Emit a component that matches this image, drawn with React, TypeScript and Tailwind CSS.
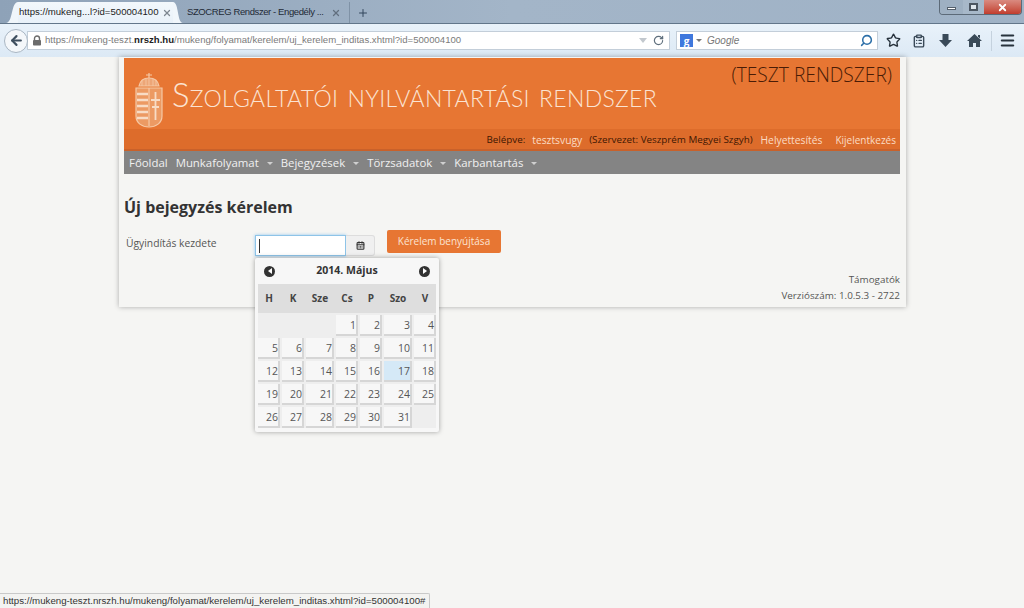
import { Star, ClipboardList, Menu, RotateCw, Search, ArrowLeft, X, Plus, CalendarDays } from "lucide-react";

const headers = ["H", "K", "Sze", "Cs", "P", "Szo", "V"];
const days: (number | null)[] = [
  null, null, null, 1, 2, 3, 4,
  5, 6, 7, 8, 9, 10, 11,
  12, 13, 14, 15, 16, 17, 18,
  19, 20, 21, 22, 23, 24, 25,
  26, 27, 28, 29, 30, 31, null,
];

function Caret() {
  return <span className="ml-[8px] mt-[1px] h-0 w-0 border-x-[3px] border-t-[3px] border-x-transparent border-t-[#d0d0d0]" />;
}

function Crest() {
  return (
    <svg width="28" height="56" viewBox="0 0 28 56" fill="none" stroke="#f6c9a6" strokeWidth="1.2">
      <path d="M14 1v5M11 3h6" />
      <path d="M4 14c1-5 5-8 10-8s9 3 10 8z" fill="#eda677" />
      <path d="M7 8v6M11 7v7M14 7v7M18 7v7M21 8v6" strokeWidth="0.8" />
      <path d="M1 16h26v28c0 7-6 11-13 11S1 51 1 44z" fill="#ec9a63" />
      <path d="M14 16v38" />
      <path d="M2 22h11M2 28h11M2 34h11M2 40h11M2 46h11" stroke="#f8dcc5" strokeWidth="2.4" />
      <path d="M20.5 20v28M16 28h9M17 35h7" stroke="#f8dcc5" strokeWidth="1.8" />
    </svg>
  );
}

export default function App() {
  return (
    <div className="relative flex h-[608px] w-[1024px] flex-col overflow-hidden bg-[#f5f5f3] font-['Open_Sans',sans-serif] text-[#333]">
      {/* Browser chrome */}
      <div className="relative flex h-[23px] shrink-0 items-end bg-gradient-to-r from-[#8ea2b8] via-[#a3b5c8] to-[#9fb2c6] font-['Liberation_Sans',sans-serif] text-[#1d1d1d]">
        <div className="ml-[6px] flex h-[21px] items-end">
          <svg width="12" height="21" viewBox="0 0 12 21" className="shrink-0">
            <path d="M0 21C7 21 5 0 12 0V21Z" fill="#f0f6fb" />
          </svg>
          <div className="flex h-[21px] w-[155px] items-center justify-between bg-gradient-to-b from-[#f3f8fc] to-[#e8f1f9] pl-[1px] pr-[1px] text-[9.6px]">
            <span className="whitespace-nowrap">https://mukeng...l?id=500004100</span>
            <X size={10} strokeWidth={3} className="text-[#7d8791]" />
          </div>
          <svg width="10" height="21" viewBox="0 0 10 21" className="shrink-0">
            <path d="M0 0C6 0 4 21 10 21H0Z" fill="#f0f6fb" />
          </svg>
        </div>
        <div className="flex h-[21px] w-[166px] items-center justify-between pl-[4px] pr-[8px] text-[9.5px] tracking-[-0.4px] text-[#1f2a36]">
          <span className="whitespace-nowrap">SZOCREG Rendszer - Engedély ...</span>
          <X size={10} strokeWidth={3} className="text-[#62707f]" />
        </div>
        <div className="flex h-[21px] items-center border-l border-[#7f92a6] pl-[7px]">
          <Plus size={12} strokeWidth={2} className="text-[#33475c]" />
        </div>
        {/* Window buttons */}
        <div className="absolute right-[2px] top-0 flex h-[15px] w-[83px] overflow-hidden rounded-b-[4px] border border-t-0 border-[#5c6a78]">
          <div className="flex w-[23px] items-center justify-center bg-[#9eb0c2]">
            <span className="mt-[3px] h-[3px] w-[9px] border border-[#54606c] bg-white" />
          </div>
          <div className="flex w-[21px] items-center justify-center bg-[#a7b8c9]">
            <span className="h-[8px] w-[9px] border-2 border-[#4c5763] bg-[#dfe7ee]" />
          </div>
          <div className="flex flex-1 items-center justify-center bg-gradient-to-b from-[#d98a80] to-[#c13c2d]">
            <X size={11} strokeWidth={4} className="text-white" />
          </div>
        </div>
      </div>
      <div className="flex h-[34px] shrink-0 items-center border-t border-[#62768a] bg-gradient-to-b from-[#e9f2fa] to-[#dce9f5] pl-[4px] pr-[6px]">
        <div className="z-10 flex h-[24px] w-[24px] shrink-0 items-center justify-center rounded-full border border-[#a9b6c3] bg-[#f4f7fa]">
          <ArrowLeft size={15} strokeWidth={3.4} className="text-[#3f4f5f]" />
        </div>
        <div className="-ml-[1px] flex h-[19px] w-[643px] shrink-0 items-center border border-[#c3ced9] bg-white pl-[4px] pr-[5px] font-['Liberation_Sans',sans-serif] text-[9.6px] text-[#7b7b7b]">
          <svg width="10" height="11" viewBox="0 0 10 11" className="mr-[3px] shrink-0 text-[#6b6b6b]">
            <path d="M2.5 5V3.5a2.5 2.5 0 0 1 5 0V5" fill="none" stroke="currentColor" strokeWidth="1.4" />
            <rect x="1" y="5" width="8" height="5.5" rx="0.8" fill="currentColor" />
          </svg>
          <span className="whitespace-nowrap">
            https://mukeng-teszt.<span className="font-bold text-[#222]">nrszh.hu</span>/mukeng/folyamat/kerelem/uj_kerelem_inditas.xhtml?id=500004100
          </span>
          <span className="ml-auto mr-[6px] h-0 w-0 border-x-[4px] border-t-[5px] border-x-transparent border-t-[#c2c8ce]" />
          <RotateCw size={11} strokeWidth={2.6} className="text-[#5f6f7d]" />
        </div>
        <div className="ml-[6px] flex h-[19px] w-[202px] shrink-0 items-center border border-[#c3ced9] bg-white pl-[3px] pr-[4px]">
          <span className="flex h-[13px] w-[13px] items-center justify-center bg-[#3f78dd] text-[10px] font-bold leading-none text-white">g</span>
          <span className="ml-[3px] h-0 w-0 border-x-[3px] border-t-[3px] border-x-transparent border-t-[#777]" />
          <span className="ml-[5px] font-['Liberation_Sans',sans-serif] text-[10px] italic text-[#777]">Google</span>
          <Search size={13} strokeWidth={2.8} className="ml-auto -scale-x-100 text-[#2c6fa8]" />
        </div>
        <div className="ml-[8px] flex flex-1 items-center text-[#3a4a58]">
          <Star size={15} strokeWidth={2.2} className="text-[#27323c]" />
          <ClipboardList size={14} strokeWidth={2.4} className="ml-[11px]" />
          <svg width="15" height="15" viewBox="0 0 15 15" fill="currentColor" className="ml-[12px]">
            <path d="M4.5 1h6v6H14l-6.5 7L1 7h3.5z" />
          </svg>
          <svg width="15" height="15" viewBox="0 0 15 15" fill="currentColor" className="ml-[14px]">
            <path d="M7.5 1 15 8h-2v6H9v-4H6v4H2V8H0z" />
            <path d="M11 2h2v3.5l-2-2z" />
          </svg>
          <span className="ml-[9px] h-[20px] w-px bg-[#c5d2de]" />
          <Menu size={17} strokeWidth={3} className="ml-[7px] text-[#27323c]" />
        </div>
      </div>

      {/* Page */}
      <div className="mx-[119px] h-[250px] w-[787px] shrink-0 pl-[5px] pr-[6px] shadow-[0_0_5px_rgba(0,0,0,0.3)]">
        <header className="mt-px flex h-[91px] flex-col bg-[#e77633]">
          <div className="flex h-[71px] items-start justify-between pl-[11px] pr-[8px]">
            <div className="mt-[14px] flex items-center">
              <Crest />
              <h1 className="ml-[9px] -mt-[10px] whitespace-nowrap font-['Lato',sans-serif] text-[32.8px] font-light leading-none tracking-[0.3px] text-[#fbe3d2] [font-variant:small-caps]">
                Szolgáltatói nyilvántartási rendszer
              </h1>
            </div>
            <span className="mt-[4px] whitespace-nowrap text-[19.2px] font-light leading-[26px] text-[#4a1c06]">(TESZT RENDSZER)</span>
          </div>
          <div className="flex h-[20px] items-center justify-end bg-[#dd6c2b] pr-[4px] pt-[3px] text-[9.8px] text-[#3d1703]">
            <span>Belépve:</span>
            <span className="ml-[7px] text-[10.3px] text-[#fbdcc5]">tesztsvugy</span>
            <span className="ml-[7px]">(Szervezet: Veszprém Megyei Szgyh)</span>
            <span className="ml-[8px] text-[10.3px] text-[#fbdcc5]">Helyettesítés</span>
            <span className="ml-[13px] text-[10px] text-[#fbdcc5]">Kijelentkezés</span>
          </div>
        </header>
        <nav className="flex h-[25px] items-center border-t-2 border-[#c9612a] bg-[#848484] pl-[5px] text-[11.4px] text-[#f0f0f0]">
          <span>Főoldal</span>
          <span className="ml-[8px]">Munkafolyamat</span>
          <Caret />
          <span className="ml-[8px]">Bejegyzések</span>
          <Caret />
          <span className="ml-[8px]">Törzsadatok</span>
          <Caret />
          <span className="ml-[8px]">Karbantartás</span>
          <Caret />
        </nav>

        <h2 className="mt-[22px] text-[16px] font-bold leading-[23px] text-[#333]">Új bejegyzés kérelem</h2>
        <div className="mt-[16px] flex items-start">
          <label className="ml-[2px] mt-[1px] w-[129px] text-[10.3px] leading-[15px] text-[#555]">Ügyindítás kezdete</label>
          <div className="flex h-[21px] w-[91px] items-center border border-[#8ec4e8] bg-white pl-[3px] shadow-[0_0_3px_rgba(82,168,236,0.6)]">
            <span className="h-[14px] w-px bg-[#333]" />
          </div>
          <div className="flex h-[21px] w-[29px] items-center justify-center rounded-r-[3px] border border-l-0 border-[#ddd] bg-[#f0f0f0] text-[#333]">
            <CalendarDays size={9} strokeWidth={3} />
          </div>
          <button className="ml-[12px] -mt-[5px] flex h-[23px] w-[114px] items-center justify-center rounded-[2px] bg-[#e77633] text-[10px] text-[#fbe3d2]">
            Kérelem benyújtása
          </button>
        </div>
        <div className="mt-[15px] text-right text-[9.85px] leading-[16px] text-[#555]">
          <div>Támogatók</div>
          <div>Verziószám: 1.0.5.3 - 2722</div>
        </div>
      </div>

      {/* Datepicker popup */}
      <div className="absolute left-[255px] top-[258px] w-[184px] rounded-[2px] bg-[#f7f7f7] px-[3px] pb-[4px] shadow-[0_0_5px_rgba(0,0,0,0.35)]">
        <div className="flex h-[26px] items-center justify-between px-[6px]">
          <span className="flex h-[11px] w-[11px] items-center justify-center rounded-full bg-[#333]">
            <span className="h-0 w-0 border-y-[3px] border-r-[4px] border-y-transparent border-r-white" />
          </span>
          <span className="text-[10.5px] font-bold text-[#333]">2014. Május</span>
          <span className="flex h-[11px] w-[11px] items-center justify-center rounded-full bg-[#333]">
            <span className="h-0 w-0 border-y-[3px] border-l-[4px] border-y-transparent border-l-white" />
          </span>
        </div>
        <div className="grid grid-cols-[22px_22px_28px_22px_22px_28px_22px] gap-x-[2px] bg-[#dedede] text-center text-[10px] font-bold leading-[29px] text-[#444]">
          {headers.map((h) => (
            <span key={h}>{h}</span>
          ))}
        </div>
        <div className="grid grid-cols-[22px_22px_28px_22px_22px_28px_22px] gap-x-[2px] gap-y-[2px] bg-[#eeeeee] pt-[2px]">
          {days.map((d, i) =>
            d === null ? (
              <span key={i} className="h-[21px]" />
            ) : (
              <span
                key={i}
                className={`h-[21px] border-b-2 border-r-2 border-[#d6d6d6] text-right text-[10.5px] leading-[20px] text-[#555] ${d === 17 ? "bg-[#d5e9f7]" : "bg-[#f7f7f7]"}`}
              >
                {d}
              </span>
            )
          )}
        </div>
      </div>

      {/* Status bar link preview */}
      <div className="absolute bottom-0 left-0 flex h-[15px] w-[430px] items-center rounded-tr-[2px] border-r border-t border-[#c9c9c9] bg-[#f3f3f1] pl-[3px] font-['Liberation_Sans',sans-serif] text-[9.7px] whitespace-nowrap text-[#333]">
        https://mukeng-teszt.nrszh.hu/mukeng/folyamat/kerelem/uj_kerelem_inditas.xhtml?id=500004100#
      </div>
    </div>
  );
}
